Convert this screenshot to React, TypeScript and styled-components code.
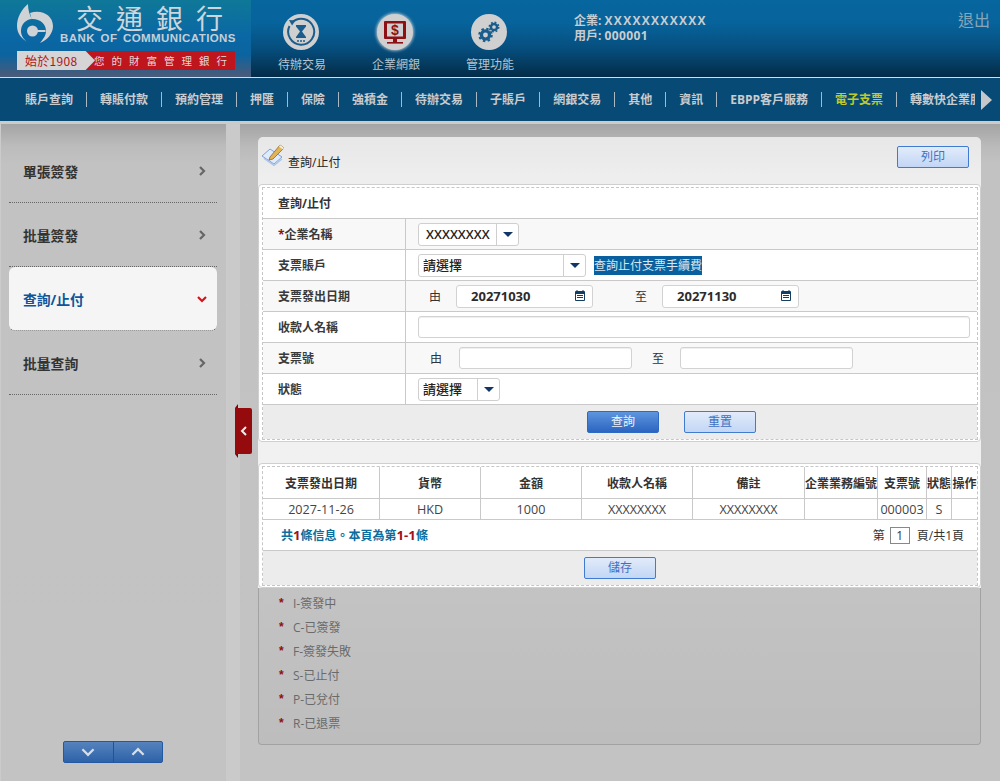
import React from "react";
import styled, { createGlobalStyle } from "styled-components";

const FONT = `"Open Sans", "Noto Sans CJK TC", sans-serif`;
const CJK = `"Noto Sans CJK TC", sans-serif`;

const Global = createGlobalStyle`
  html, body { margin: 0; padding: 0; background: #c3c3c3; }
  body { font-family: ${FONT}; font-size: 12px; color: #333; overflow: hidden; }
  * { box-sizing: border-box; }
`;

const Page = styled.div`
  width: 1000px;
  height: 781px;
  display: flex;
  flex-direction: column;
  overflow: hidden;
`;

/* ---------- header ---------- */
const Header = styled.header`
  height: 78px;
  flex: none;
  display: flex;
  border-bottom: 1px solid #d8dde0;
  background: linear-gradient(#07669f 0%, #07639b 30%, #064f7f 62%, #042c48 100%);
`;
const Logo = styled.div`
  width: 251px;
  flex: none;
  padding: 3px 0 0 17px;
  background: linear-gradient(#0f7898 0%, #0a68a4 45%, #0a64a0 70%, #4c5a78 100%);
`;
const LogoTop = styled.div`
  display: flex;
  height: 41px;
`;
const LogoText = styled.div`
  margin-left: 7px;
  display: flex;
  flex-direction: column;
`;
const LogoCn = styled.div`
  font-family: ${CJK};
  font-size: 27px;
  line-height: 40px;
  margin: -5px 0 -5px;
  padding-left: 16px;
  letter-spacing: 13px;
  color: #cdd6dc;
  white-space: nowrap;
`;
const LogoEn = styled.div`
  font-family: "Liberation Sans", sans-serif;
  font-weight: 700;
  font-size: 11.5px;
  line-height: 12px;
  margin-top: -1px;
  letter-spacing: 0.42px;
  word-spacing: 2px;
  color: #c6cfd6;
  white-space: nowrap;
`;
const Slogan = styled.div`
  margin-top: 7px;
  width: 218px;
  height: 19px;
  display: flex;
  background: #bf151c;
  position: relative;
`;
const SloganLeft = styled.div`
  width: 78px;
  padding-left: 8px;
  background: #d6d4d4;
  clip-path: polygon(0 0, 88% 0, 100% 50%, 88% 100%, 0 100%);
  color: #b0141b;
  font-size: 12px;
  line-height: 19px;
  font-family: ${CJK};
  letter-spacing: 0.3px;
  white-space: nowrap;
`;
const SloganRight = styled.div`
  color: #e6d8d8;
  font-family: ${CJK};
  font-size: 10.5px;
  line-height: 19px;
  margin-left: -1px;
  letter-spacing: 7px;
  white-space: nowrap;
`;
const Quick = styled.div`
  margin-left: 3px;
  display: flex;
`;
const QuickItem = styled.div`
  width: 94px;
  padding-top: 14px;
  display: flex;
  flex-direction: column;
  align-items: center;
`;
const QuickCircle = styled.div<{ $active?: boolean }>`
  width: 36px;
  height: 36px;
  border-radius: 50%;
  background: #d0d0d0;
  display: flex;
  align-items: center;
  justify-content: center;
  box-shadow: ${(p) => (p.$active ? "0 0 3px 1px rgba(225,225,225,.75)" : "none")};
`;
const QuickLabel = styled.div`
  margin-top: 6px;
  padding-left: 2px;
  font-size: 12px;
  line-height: 16px;
  color: #b5c3cd;
  font-family: ${CJK};
  white-space: nowrap;
`;
const UserInfo = styled.div`
  margin-left: 38px;
  padding-top: 13px;
  font-weight: 700;
  font-size: 12px;
  line-height: 15px;
  color: #c9cdd0;
`;
const UserValue = styled.span<{ $track: number }>`
  letter-spacing: ${(p) => p.$track}px;
`;
const Logout = styled.div`
  margin-left: auto;
  margin-right: 10px;
  padding-top: 7px;
  font-size: 16px;
  line-height: 24px;
  color: #86a6bb;
  font-family: ${CJK};
`;

/* ---------- nav ---------- */
const Nav = styled.nav`
  height: 43px;
  flex: none;
  display: flex;
  align-items: center;
  background: #074a75;
  padding-left: 12px;
`;
const NavList = styled.div`
  width: 963px;
  display: flex;
  overflow: hidden;
`;
const NavItem = styled.div<{ $active?: boolean }>`
  flex: none;
  padding: 0 13px;
  line-height: 15px;
  font-weight: 700;
  font-size: 12px;
  border-right: 1px solid #a9b9c4;
  color: ${(p) => (p.$active ? "#c2c92a" : "#c9ccce")};
  white-space: nowrap;
  &:last-child { border-right: 0; }
`;
const NavArrow = styled.div`
  margin-left: 6px;
  width: 0;
  height: 0;
  border-left: 11px solid #c6c9cb;
  border-top: 10.5px solid transparent;
  border-bottom: 10.5px solid transparent;
`;

/* ---------- layout ---------- */
const Body = styled.div`
  flex: 1;
  min-height: 0;
  display: flex;
  padding-top: 3px;
  background: #cbcbcb;
`;
const Sidebar = styled.aside`
  margin-left: 1px;
  width: 225px;
  flex: none;
  display: flex;
  flex-direction: column;
  padding: 15px 0 18px 8px;
  background: linear-gradient(#a4a4a4 0, #bcbcbc 22px, #c2c2c2 40px, #c3c3c3 100%);
`;
const MenuItem = styled.div<{ $active?: boolean }>`
  width: 208px;
  height: 64px;
  flex: none;
  display: flex;
  align-items: center;
  justify-content: space-between;
  padding: 0 10px 0 14px;
  border-bottom: 1px dotted #666;
  border-radius: ${(p) => (p.$active ? "6px" : "0")};
  background: ${(p) => (p.$active ? "#f5f5f5" : "transparent")};
  color: ${(p) => (p.$active ? "#0f559a" : "#333")};
  font-size: 13.8px;
  font-weight: 700;
`;
const Pager = styled.div`
  margin-top: auto;
  margin-left: 54px;
  width: 100px;
  height: 22px;
  display: flex;
  border: 1px solid #2359a0;
  border-radius: 2px;
  background: linear-gradient(#5683bd, #2d62a8);
`;
const PagerBtn = styled.div`
  flex: 1;
  display: flex;
  align-items: center;
  justify-content: center;
  & + & { border-left: 1px solid #1f5498; }
`;
const Strip = styled.div`
  width: 14px;
  flex: none;
  background: #cacaca;
  position: relative;
`;
const Toggle = styled.div`
  position: absolute;
  left: 9px;
  top: 284px;
  width: 17px;
  height: 46px;
  background: #950a0d;
  border-radius: 0 2px 2px 0;
  display: flex;
  align-items: center;
  justify-content: center;
  &::before, &::after {
    content: "";
    position: absolute;
    left: 0;
    border-left: 3px solid transparent;
    border-right: 0 solid transparent;
  }
  &::before { top: -4px; border-bottom: 4px solid #7d0508; }
  &::after { bottom: -4px; border-top: 4px solid #7d0508; }
`;
const Main = styled.main`
  flex: 1;
  padding: 13px 19px 0 18px;
  background: linear-gradient(#a4a4a4 0, #bababa 22px, #c2c2c2 40px, #c3c3c3 100%);
`;
const Panel = styled.section`
  width: 723px;
  height: 608px;
  display: flex;
  flex-direction: column;
`;
const PanelTop = styled.div`
  border-radius: 5px 5px 0 0;
  background: linear-gradient(#e7e7e7, #eeeeee 40px, #f2f2f2);
  flex: none;
`;
const PanelHead = styled.div`
  height: 47px;
  display: flex;
`;
const HeadIcon = styled.div`
  margin: 5px 0 0 3px;
  width: 24px;
  height: 25px;
`;
const HeadTitle = styled.div`
  margin: 18px 0 0 3px;
  font-size: 12px;
  line-height: 16px;
  color: #222;
`;
const Card = styled.div`
  background: #fff;
  border: 1px solid #cfcfcf;
  border-radius: 4px;
  padding: 2px 2px 1px 3px;
  & + & { margin-top: 21px; }
`;
const Dashed = styled.div`
  border: 1px dashed #c6c6c6;
  display: flex;
  flex-direction: column;
`;
const TitleRow = styled.div`
  height: 31px;
  padding-left: 15px;
  display: flex;
  align-items: center;
  font-weight: 700;
  color: #333;
  border-bottom: 1px solid #c9c9c9;
`;
const Row = styled.div<{ $alt?: boolean }>`
  height: 31px;
  display: flex;
  border-bottom: 1px solid #c9c9c9;
  background: ${(p) => (p.$alt ? "#f8f8f8" : "#fff")};
`;
const RowLabel = styled.div`
  width: 143px;
  flex: none;
  padding-left: 15px;
  display: flex;
  align-items: center;
  font-weight: 700;
  color: #3a3a3a;
  border-right: 1px solid #c9c9c9;
  white-space: nowrap;
`;
const Req = styled.span`
  color: #8c0f12;
`;
const RowValue = styled.div`
  flex: 1;
  display: flex;
  align-items: center;
  padding-left: 12px;
`;
const Select = styled.div<{ $w: number }>`
  width: ${(p) => p.$w}px;
  height: 23px;
  flex: none;
  display: flex;
  background: #fff;
  border: 1px solid #cfcfcf;
  border-radius: 3px;
`;
const SelectValue = styled.div<{ $bold?: boolean }>`
  flex: 1;
  min-width: 0;
  padding-left: ${(p) => (p.$bold ? "7px" : "4px")};
  line-height: 21px;
  font-size: ${(p) => (p.$bold ? "12.8px" : "13px")};
  font-weight: ${(p) => (p.$bold ? 600 : 500)};
  color: #222;
  white-space: nowrap;
`;
const SelectArrow = styled.div`
  width: 22px;
  flex: none;
  border-left: 1px solid #cfcfcf;
  display: flex;
  align-items: center;
  justify-content: center;
  &::after {
    content: "";
    border-top: 5px solid #0f3666;
    border-left: 5px solid transparent;
    border-right: 5px solid transparent;
  }
`;
const HelpLink = styled.a`
  margin-left: 8px;
  height: 19px;
  line-height: 19px;
  background: #0a5f9e;
  color: #d9e6ef;
  font-size: 12px;
  white-space: nowrap;
`;
const RangeLabel = styled.span<{ $l: number; $r: number }>`
  margin-left: ${(p) => p.$l}px;
  margin-right: ${(p) => p.$r}px;
  font-size: 12px;
  color: #333;
  flex: none;
`;
const DateField = styled.div`
  width: 137px;
  height: 23px;
  flex: none;
  display: flex;
  align-items: center;
  justify-content: space-between;
  padding: 0 6px 0 14px;
  background: #fff;
  border: 1px solid #d2d2d2;
  border-radius: 3px;
  font-weight: 700;
  font-size: 13px;
  color: #2c2c2c;
`;
const TextInput = styled.input<{ $w?: number }>`
  width: ${(p) => (p.$w ? `${p.$w}px` : "552px")};
  height: 22px;
  flex: none;
  padding: 0 6px;
  background: #fff;
  border: 1px solid #d2d2d2;
  border-radius: 3px;
  box-shadow: inset 0 1px 1px #eee;
  outline: none;
`;
const Footer = styled.div<{ $left?: number }>`
  height: 34px;
  display: flex;
  align-items: flex-start;
  padding-top: 6px;
  padding-left: ${(p) => (p.$left ? `${p.$left}px` : "0")};
  justify-content: ${(p) => (p.$left ? "flex-start" : "center")};
  gap: 25px;
  background: #ececec;
`;
const Btn = styled.button<{ $primary?: boolean }>`
  width: 72px;
  height: 22px;
  padding: 0;
  flex: none;
  border-radius: 2px;
  font-family: ${FONT};
  font-size: 12px;
  line-height: 18px;
  border: 1px solid ${(p) => (p.$primary ? "#2e69c2" : "#3f7bd0")};
  color: ${(p) => (p.$primary ? "#f2f5fa" : "#3f70c2")};
  background: ${(p) =>
    p.$primary
      ? "linear-gradient(#5f95de, #2a65c0)"
      : "linear-gradient(#e2ebfa, #c2d6f5)"};
`;
const PrintBtn = styled(Btn)`
  margin: 9px 12px 0 auto;
`;
const Grid = styled.table`
  width: 714px;
  table-layout: fixed;
  border-collapse: separate;
  border-spacing: 0;
`;
const Th = styled.th`
  height: 32px;
  padding: 0;
  font-size: 12px;
  font-weight: 700;
  color: #333;
  text-align: center;
  white-space: nowrap;
  overflow: visible;
  border-right: 1px solid #c9c9c9;
  border-bottom: 1px solid #c9c9c9;
  &:last-child { border-right: 0; }
`;
const Td = styled.td`
  height: 21px;
  padding: 0;
  font-size: 12.6px;
  color: #444;
  text-align: center;
  white-space: nowrap;
  border-right: 1px solid #c9c9c9;
  border-bottom: 1px solid #c9c9c9;
  &:last-child { border-right: 0; }
`;
const InfoRow = styled.div`
  height: 31px;
  display: flex;
  align-items: center;
  justify-content: space-between;
  padding: 0 13px 0 18px;
  border-bottom: 1px solid #c9c9c9;
`;
const InfoText = styled.div`
  font-weight: 700;
  font-size: 12px;
  color: #0b6e9e;
`;
const Num = styled.span`
  color: #a5101a;
  font-size: 13.2px;
  line-height: 12px;
`;
const PageText = styled.div`
  display: flex;
  align-items: center;
  font-size: 12px;
  color: #333;
`;
const PageBox = styled.span`
  width: 20px;
  height: 17px;
  line-height: 15px;
  text-align: center;
  margin: 0 7px 0 5px;
  border: 1px solid #888;
`;
const Legend = styled.ul`
  flex: 1;
  margin: 0;
  list-style: none;
  padding: 3px 0 0 20px;
  border: 1px solid #a2a2a2;
  border-top: 0;
  border-radius: 0 0 4px 4px;
  background: linear-gradient(#c3c3c3, #bdbdbd);
`;
const LegendItem = styled.li`
  height: 24px;
  display: flex;
  align-items: center;
  font-size: 12px;
  color: #6a6a6a;
`;
const Star = styled.span`
  width: 14px;
  color: #8c0f12;
  font-size: 12px;
  font-family: "Liberation Sans", sans-serif;
  font-weight: 700;
`;

/* ---------- drawings ---------- */
const LogoMark = () => (
  <svg width="36" height="41" viewBox="0 0 36 41" aria-hidden="true">
    <path
      fill="#cfd3d6"
      d="M11 1 C4 7 0 15 0 23 C0 31 5 36 11 39.5 C6 36 4 32 4 28 C4 21 9 16.5 15 16 C13 13 11 7 11 1 Z"
    />
    <path
      fill="#cfd3d6"
      d="M13 10 C24 6 36 12 36 23 C36 31 30 37 23 40 C27 35 29 32 29 28 C29 21 23 15.5 14.5 16 Z"
    />
    <circle cx="15.5" cy="28" r="5.5" fill="#cfd3d6" />
    <rect x="15.5" y="27" width="13" height="2" fill="#cfd3d6" />
  </svg>
);

const HourglassIcon = () => (
  <svg width="30" height="30" viewBox="0 0 30 30" aria-hidden="true">
    <path d="M6 5.5 A13 13 0 1 1 3.5 9" fill="none" stroke="#1a5d8c" strokeWidth="2" />
    <path d="M3 3 L9.5 3.5 L6 8.5 Z" fill="#1a5d8c" />
    <path d="M10 8 H20 V9.5 L16 14.5 L20 20 V21 H10 V20 L14 14.5 L10 9.5 Z" fill="#1a5d8c" />
    <path d="M11 24 h2 M14 24 h2 M17 24 h2" stroke="#1a5d8c" strokeWidth="1.5" />
  </svg>
);

const MonitorIcon = () => (
  <svg width="28" height="28" viewBox="0 0 28 28" aria-hidden="true">
    <rect x="3" y="3" width="22" height="18" rx="1" fill="#8c1014" />
    <rect x="6" y="5.5" width="16" height="13" fill="#d0d0d0" />
    <text
      x="14"
      y="17"
      textAnchor="middle"
      fontFamily="Liberation Sans, sans-serif"
      fontWeight="700"
      fontSize="14"
      fill="#8c1014"
    >
      $
    </text>
    <rect x="12" y="21" width="4" height="3" fill="#8c1014" />
    <rect x="6" y="24" width="16" height="1.6" fill="#8c1014" />
  </svg>
);

const Gear = ({ cx, cy, r }: { cx: number; cy: number; r: number }) => (
  <g fill="none" stroke="#1a5d8c">
    <circle cx={cx} cy={cy} r={r * 0.62} strokeWidth={r * 0.5} />
    <circle
      cx={cx}
      cy={cy}
      r={r * 0.95}
      strokeWidth={r * 0.3}
      strokeDasharray={`${(r * 0.95 * 2 * Math.PI) / 16} ${(r * 0.95 * 2 * Math.PI) / 16}`}
    />
  </g>
);

const GearsIcon = () => (
  <svg width="30" height="30" viewBox="0 0 30 30" aria-hidden="true">
    <Gear cx={11.5} cy={18} r={6.6} />
    <Gear cx={20} cy={10} r={5} />
  </svg>
);

const CalendarIcon = () => (
  <svg width="12" height="12" viewBox="0 0 12 12" aria-hidden="true">
    <rect x="1" y="1" width="10" height="10" rx="1" fill="#123e63" />
    <rect x="2" y="4" width="8" height="6" fill="#fff" />
    <path d="M3 5.5 h6 M3 7.5 h6" stroke="#123e63" strokeWidth="1" />
    <path d="M3 0 v2 M9 0 v2" stroke="#123e63" strokeWidth="1" />
  </svg>
);

const NoteIcon = () => (
  <svg width="24" height="25" viewBox="0 0 24 25" aria-hidden="true">
    <path d="M1 14 L9 7 L21 15 L13 22 Z" fill="#dfeafa" stroke="#7fa3d6" strokeWidth="1" />
    <path d="M3 16.5 L13 23.5 L21 17" fill="none" stroke="#a9c3e8" strokeWidth="1.2" />
    <path d="M9 15 L19 3 L23 6 L12 17 L8 18 Z" fill="#e2b45a" stroke="#8f6a28" strokeWidth="0.8" />
    <path d="M19 3 L23 6 L22 7.5 L18 4.5 Z" fill="#f4f1e4" />
  </svg>
);

const Chevron = ({
  dir,
  color,
  size = 10,
  width = 2,
}: {
  dir: "left" | "right" | "up" | "down";
  color: string;
  size?: number;
  width?: number;
}) => {
  const d = {
    right: "M3 1 L7 5 L3 9",
    left: "M7 1 L3 5 L7 9",
    down: "M1 3 L5 7 L9 3",
    up: "M1 7 L5 3 L9 7",
  }[dir];
  return (
    <svg width={size} height={size} viewBox="0 0 10 10" aria-hidden="true">
      <path d={d} fill="none" stroke={color} strokeWidth={width} />
    </svg>
  );
};

const navItems = [
  "賬戶查詢", "轉賬付款", "預約管理", "押匯", "保險", "強積金", "待辦交易",
  "子賬戶", "網銀交易", "其他", "資訊", "EBPP客戶服務", "電子支票", "轉數快企業服務",
];
const menu = ["單張簽發", "批量簽發", "查詢/止付", "批量查詢"];
const cols = [117, 101, 101, 111, 112, 73, 49, 25, 25];
const heads = ["支票發出日期", "貨幣", "金額", "收款人名稱", "備註", "企業業務編號", "支票號", "狀態", "操作"];
const cells = ["2027-11-26", "HKD", "1000", "XXXXXXXX", "XXXXXXXX", "", "000003", "S", ""];
const legend = ["I-簽發中", "C-已簽發", "F-簽發失敗", "S-已止付", "P-已兌付", "R-已退票"];

export default function App() {
  return (
    <Page>
      <Global />
      <Header>
        <Logo>
          <LogoTop>
            <LogoMark />
            <LogoText>
              <LogoCn>交通銀行</LogoCn>
              <LogoEn>BANK OF COMMUNICATIONS</LogoEn>
            </LogoText>
          </LogoTop>
          <Slogan>
            <SloganLeft>始於1908</SloganLeft>
            <SloganRight>您的財富管理銀行</SloganRight>
          </Slogan>
        </Logo>
        <Quick>
          <QuickItem>
            <QuickCircle><HourglassIcon /></QuickCircle>
            <QuickLabel>待辦交易</QuickLabel>
          </QuickItem>
          <QuickItem>
            <QuickCircle $active><MonitorIcon /></QuickCircle>
            <QuickLabel>企業網銀</QuickLabel>
          </QuickItem>
          <QuickItem>
            <QuickCircle><GearsIcon /></QuickCircle>
            <QuickLabel>管理功能</QuickLabel>
          </QuickItem>
        </Quick>
        <UserInfo>
          <div>企業: <UserValue $track={1.3}>XXXXXXXXXXX</UserValue></div>
          <div>用戶: <UserValue $track={0.4}>000001</UserValue></div>
        </UserInfo>
        <Logout>退出</Logout>
      </Header>
      <Nav>
        <NavList>
          {navItems.map((n) => (
            <NavItem key={n} $active={n === "電子支票"}>{n}</NavItem>
          ))}
        </NavList>
        <NavArrow />
      </Nav>
      <Body>
        <Sidebar>
          {menu.map((m, i) => (
            <MenuItem key={m} $active={i === 2}>
              {m}
              {i === 2 ? (
                <Chevron dir="down" color="#d0161c" width={2.2} />
              ) : (
                <Chevron dir="right" color="#666" width={2.2} />
              )}
            </MenuItem>
          ))}
          <Pager>
            <PagerBtn><Chevron dir="down" color="#d8dee8" size={14} width={1.6} /></PagerBtn>
            <PagerBtn><Chevron dir="up" color="#d8dee8" size={14} width={1.6} /></PagerBtn>
          </Pager>
        </Sidebar>
        <Strip>
          <Toggle><Chevron dir="left" color="#eee" width={2} /></Toggle>
        </Strip>
        <Main>
          <Panel>
            <PanelTop>
              <PanelHead>
                <HeadIcon><NoteIcon /></HeadIcon>
                <HeadTitle>查詢/止付</HeadTitle>
                <PrintBtn>列印</PrintBtn>
              </PanelHead>
              <Card>
                <Dashed>
                  <TitleRow>查詢/止付</TitleRow>
                  <Row $alt>
                    <RowLabel><Req>*</Req>企業名稱</RowLabel>
                    <RowValue>
                      <Select $w={101}>
                        <SelectValue $bold>XXXXXXXX</SelectValue>
                        <SelectArrow />
                      </Select>
                    </RowValue>
                  </Row>
                  <Row>
                    <RowLabel>支票賬戶</RowLabel>
                    <RowValue>
                      <Select $w={168}>
                        <SelectValue>請選擇</SelectValue>
                        <SelectArrow />
                      </Select>
                      <HelpLink>查詢止付支票手續費</HelpLink>
                    </RowValue>
                  </Row>
                  <Row $alt>
                    <RowLabel>支票發出日期</RowLabel>
                    <RowValue>
                      <RangeLabel $l={11} $r={15}>由</RangeLabel>
                      <DateField>20271030<CalendarIcon /></DateField>
                      <RangeLabel $l={42} $r={15}>至</RangeLabel>
                      <DateField>20271130<CalendarIcon /></DateField>
                    </RowValue>
                  </Row>
                  <Row>
                    <RowLabel>收款人名稱</RowLabel>
                    <RowValue><TextInput readOnly /></RowValue>
                  </Row>
                  <Row $alt>
                    <RowLabel>支票號</RowLabel>
                    <RowValue>
                      <RangeLabel $l={12} $r={17}>由</RangeLabel>
                      <TextInput $w={173} readOnly />
                      <RangeLabel $l={20} $r={16}>至</RangeLabel>
                      <TextInput $w={173} readOnly />
                    </RowValue>
                  </Row>
                  <Row>
                    <RowLabel>狀態</RowLabel>
                    <RowValue>
                      <Select $w={82}>
                        <SelectValue>請選擇</SelectValue>
                        <SelectArrow />
                      </Select>
                    </RowValue>
                  </Row>
                  <Footer $left={324}>
                    <Btn $primary>查詢</Btn>
                    <Btn>重置</Btn>
                  </Footer>
                </Dashed>
              </Card>
              <Card>
                <Dashed>
                  <Grid>
                    <colgroup>
                      {cols.map((c, i) => <col key={i} width={c} />)}
                    </colgroup>
                    <thead>
                      <tr>{heads.map((h) => <Th key={h}>{h}</Th>)}</tr>
                    </thead>
                    <tbody>
                      <tr>{cells.map((c, i) => <Td key={i}>{c}</Td>)}</tr>
                    </tbody>
                  </Grid>
                  <InfoRow>
                    <InfoText>共<Num>1</Num>條信息。本頁為第<Num>1-1</Num>條</InfoText>
                    <PageText>第<PageBox>1</PageBox>頁/共1頁</PageText>
                  </InfoRow>
                  <Footer>
                    <Btn>儲存</Btn>
                  </Footer>
                </Dashed>
              </Card>
            </PanelTop>
            <Legend>
              {legend.map((l) => (
                <LegendItem key={l}><Star>*</Star>{l}</LegendItem>
              ))}
            </Legend>
          </Panel>
        </Main>
      </Body>
    </Page>
  );
}
